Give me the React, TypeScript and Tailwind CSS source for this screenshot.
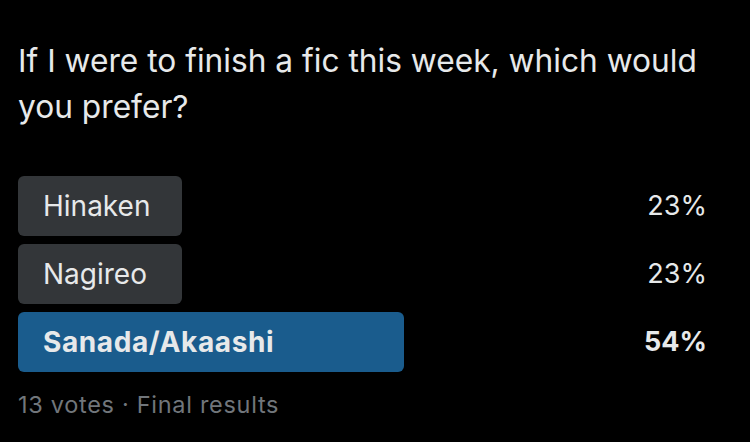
import React from "react";

const options = [
  { label: "Hinaken", pct: 23, winner: false },
  { label: "Nagireo", pct: 23, winner: false },
  { label: "Sanada/Akaashi", pct: 54, winner: true },
];

const App = () => {
  return (
    <div
      className="w-[750px] h-[442px] bg-black text-[#e7e9ea] px-[18px] pt-[38px] overflow-hidden"
      style={{ fontFamily: "Inter, 'Liberation Sans', sans-serif" }}
    >
      <p className="text-[31.7px] leading-[46px]">
        If I were to finish a fic this week, which would you prefer?
      </p>

      <div className="mt-[46px] flex flex-col gap-2 pr-[25px]">
        {options.map((o) => (
          <div key={o.label} className="flex items-center h-[60px]">
            <div className="flex-1 relative h-full">
              <div
                className={
                  "absolute inset-y-0 left-0 rounded-[6px] " +
                  (o.winner ? "bg-[#1a5c8d]" : "bg-[#333639]")
                }
                style={{ width: `${(o.pct / 100) * 715}px` }}
              />
              <span
                className={
                  "relative flex items-center h-full pl-[25px] text-[28px] " +
                  (o.winner ? "font-bold tracking-[0.6px]" : "")
                }
              >
                {o.label}
              </span>
            </div>
            <span className={"text-[27px] " + (o.winner ? "font-bold" : "")}>{o.pct}%</span>
          </div>
        ))}
      </div>

      <p className="mt-[15px] text-[23.5px] tracking-[0.7px] text-[#71767b]">13 votes · Final results</p>
    </div>
  );
};

export default App;
